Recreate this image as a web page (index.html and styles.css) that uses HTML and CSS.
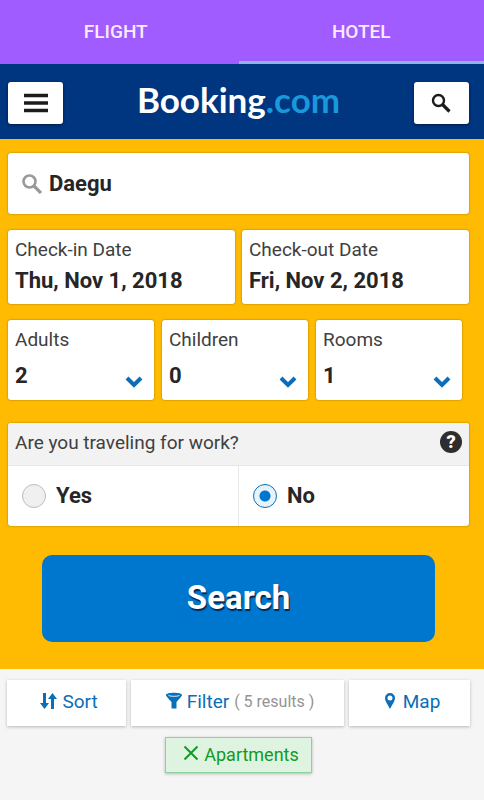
FILE: index.html
```html
<!DOCTYPE html>
<html lang="en">
<head>
    <meta charset="utf-8">
    <meta name="viewport" content="width=device-width, initial-scale=1">
    <title>Booking.com</title>
    <link rel="stylesheet" href="styles.css">
</head>
<body>
    <nav class="tabs">
        <a class="tab" href="#flight">FLIGHT</a>
        <a class="tab active" href="#hotel">HOTEL</a>
    </nav>

    <header class="header">
        <button class="header-btn" type="button" aria-label="Menu">
            <svg width="26" height="20" viewBox="0 0 26 20">
                <path d="M1 2.500h24M1 10h24M1 17.500h24" stroke="#1c1c1c" stroke-width="3.400"/>
            </svg>
        </button>
        <a class="logo" href="#home">Booking<span>.com</span></a>
        <button class="header-btn" type="button" aria-label="Search">
            <svg width="20" height="20" viewBox="0 0 20 20" fill="none" stroke="#1c1c1c">
                <circle cx="7.500" cy="7.500" r="5.500" stroke-width="2.400"/>
                <path d="M11.500 11.500l7 7" stroke-width="3.200"/>
            </svg>
        </button>
    </header>

    <form class="search-form">
        <div class="field destination">
            <svg width="20" height="20" viewBox="0 0 20 20" fill="none" stroke="#999">
                <circle cx="7.500" cy="7.500" r="6" stroke-width="2.600"/>
                <path d="M12 12l7 7" stroke-width="3.200"/>
            </svg>
            <input class="value" type="text" value="Daegu" aria-label="Destination">
        </div>

        <div class="dates">
            <button class="field date" type="button">
                <span class="label">Check-in Date</span>
                <span class="value">Thu, Nov 1, 2018</span>
            </button>
            <button class="field date" type="button">
                <span class="label">Check-out Date</span>
                <span class="value">Fri, Nov 2, 2018</span>
            </button>
        </div>

        <div class="guests">
            <div class="field guest">
                <label class="label" for="adults">Adults</label>
                <div class="select">
                    <select class="value" id="adults">
                        <option>1</option>
                        <option selected>2</option>
                        <option>3</option>
                        <option>4</option>
                    </select>
                    <svg width="18" height="12" viewBox="0 0 18 12"><path d="M2 2l7 7 7-7" fill="none" stroke="#0a6eb8" stroke-width="4"/></svg>
                </div>
            </div>
            <div class="field guest">
                <label class="label" for="children">Children</label>
                <div class="select">
                    <select class="value" id="children">
                        <option selected>0</option>
                        <option>1</option>
                        <option>2</option>
                        <option>3</option>
                    </select>
                    <svg width="18" height="12" viewBox="0 0 18 12"><path d="M2 2l7 7 7-7" fill="none" stroke="#0a6eb8" stroke-width="4"/></svg>
                </div>
            </div>
            <div class="field guest">
                <label class="label" for="rooms">Rooms</label>
                <div class="select">
                    <select class="value" id="rooms">
                        <option selected>1</option>
                        <option>2</option>
                        <option>3</option>
                    </select>
                    <svg width="18" height="12" viewBox="0 0 18 12"><path d="M2 2l7 7 7-7" fill="none" stroke="#0a6eb8" stroke-width="4"/></svg>
                </div>
            </div>
        </div>

        <div class="field work" role="radiogroup" aria-labelledby="work-title">
            <div class="work-head">
                <span class="label" id="work-title">Are you traveling for work?</span>
                <button class="help" type="button" aria-label="Help">?</button>
            </div>
            <div class="work-options">
                <label class="option value"><input type="radio" name="work" value="yes">Yes</label>
                <label class="option value"><input type="radio" name="work" value="no" checked>No</label>
            </div>
        </div>

        <button class="submit" type="submit">Search</button>
    </form>

    <section class="results">
        <div class="toolbar">
            <button class="tool" type="button">
                <svg width="17" height="21" viewBox="0 0 17 21" fill="#0a6eb8">
                    <path d="M3 1h3v10h3l-4.500 6L0 11h3z"/>
                    <path d="M11 17h3V7h3l-4.500-6L8 7h3z"/>
                </svg>
                Sort
            </button>
            <button class="tool" type="button">
                <svg width="16" height="21" viewBox="0 0 16 21">
                    <path d="M0 3c0-3 16-3 16 0 0 1-1 2-5.500 7v6.500h-5V10C1 5 0 4 0 3z" fill="#0a6eb8"/>
                    <path d="M2.500 3.200c2 1.600 9 1.600 11 0" fill="none" stroke="#9fd0ef" stroke-width="1.200"/>
                </svg>
                Filter <small>( 5 results )</small>
            </button>
            <button class="tool" type="button">
                <svg width="14" height="21" viewBox="0 0 14 21">
                    <path d="M6 1a5 5 0 0 0-5 5c0 3.500 3 6.500 5 11 2-4.500 5-7.500 5-11a5 5 0 0 0-5-5zm0 2.500a2.500 2.500 0 1 1 0 5 2.500 2.500 0 0 1 0-5z" fill="#0a6eb8" fill-rule="evenodd"/>
                </svg>
                Map
            </button>
        </div>
        <button class="chip" type="button">
            <svg width="16" height="20" viewBox="0 0 16 20"><path d="M1.500 1.500l13 13M14.500 1.500l-13 13" stroke="#129a24" stroke-width="2"/></svg>
            Apartments
        </button>
    </section>
</body>
</html>
```
FILE: styles.css
```css
:root {
    --blue: #0077cf;
    --blue-dark: #0a6eb8;
    --navy: #003580;
    --yellow: #ffba02;
    --purple: #a05cff;
    --text: #262626;
}

* {
    box-sizing: border-box;
}

body {
    margin: 0;
    min-height: 100vh;
    background: #f5f5f5;
    color: var(--text);
    font-family: Roboto, sans-serif;
}

button,
input,
select {
    margin: 0;
    padding: 0;
    border: none;
    background: none;
    color: inherit;
    font-family: inherit;
}

button {
    cursor: pointer;
}

svg {
    flex: none;
}

.tabs {
    display: flex;
    margin-left: -7px;
    background: var(--purple);
}

.tab {
    flex: 1;
    padding: 20px 0 17px;
    border-bottom: 3px solid transparent;
    color: #fbeaff;
    font-size: 19px;
    font-weight: 500;
    line-height: 24px;
    text-align: center;
    text-decoration: none;
}

.tab.active {
    border-color: #8eb4e8;
}

.header {
    display: flex;
    align-items: center;
    justify-content: space-between;
    padding: 18px 15px 15px 8px;
    background: var(--navy);
}

.header-btn {
    display: flex;
    align-items: center;
    justify-content: center;
    width: 55px;
    height: 42px;
    border-radius: 3px;
    background: #fff;
    box-shadow: 0 1px 3px rgba(0, 0, 0, 0.5);
}

.logo {
    padding-bottom: 8px;
    color: #fff;
    font-family: Lato, sans-serif;
    font-size: 35px;
    font-weight: 700;
    line-height: 34px;
    text-decoration: none;
}

.logo span {
    color: #1a98dc;
}

.search-form {
    display: flex;
    flex-direction: column;
    gap: 16px;
    padding: 14px 15px 27px 8px;
    background: var(--yellow);
}

.field {
    border-radius: 3px;
    background: #fff;
    box-shadow: 0 0 2px rgba(110, 90, 0, 0.7);
}

.label {
    color: #404040;
    font-size: 19px;
    line-height: 24px;
}

.value {
    color: var(--text);
    font-size: 22px;
    font-weight: 700;
    line-height: 28px;
}

.destination {
    display: flex;
    align-items: center;
    gap: 7px;
    padding: 16px 14px;
}

.destination input {
    flex: 1;
    min-width: 0;
    height: 29px;
    outline: none;
}

.dates {
    display: flex;
    gap: 7px;
}

.date {
    display: flex;
    flex: 1;
    flex-direction: column;
    gap: 5px;
    padding: 8px 7px 9px;
    text-align: left;
}

.guests {
    display: flex;
    gap: 8px;
    margin-right: 7px;
}

.guest {
    display: flex;
    flex: 1;
    flex-direction: column;
    gap: 10px;
    padding: 8px 7px 10px;
}

.select {
    display: grid;
    align-items: center;
}

.select select,
.select svg {
    grid-area: 1 / 1;
}

.select select {
    width: 100%;
    appearance: none;
    outline: none;
}

.select svg {
    align-self: end;
    justify-self: end;
    margin: 0 4px 2px 0;
    pointer-events: none;
}

.work {
    margin-top: 7px;
    overflow: hidden;
}

.work-head {
    display: flex;
    justify-content: space-between;
    padding: 8px 7px 10px;
    border-bottom: 1px solid #e6e6e6;
    background: #f2f2f2;
}

.help {
    width: 22px;
    height: 22px;
    border-radius: 50%;
    background: #2e2e2e;
    color: #fff;
    font-size: 18px;
    font-weight: 900;
    line-height: 22px;
}

.work-options {
    display: flex;
}

.option {
    display: flex;
    flex: 1;
    align-items: center;
    gap: 10px;
    padding: 16px 14px;
}

.option + .option {
    border-left: 1px solid #e6e6e6;
}

.option input {
    width: 24px;
    height: 24px;
    border: 1px solid #bdbdbd;
    border-radius: 50%;
    background: #f0f0f0;
    appearance: none;
}

.option input:checked {
    border-color: var(--blue-dark);
    background: radial-gradient(circle, var(--blue) 5px, #e6f3fc 6px);
}

.submit {
    margin: 13px 34px 0;
    padding: 22px 0 23px;
    border-radius: 10px;
    background: var(--blue);
    color: #fff;
    font-size: 33px;
    font-weight: 700;
    line-height: 42px;
    text-shadow: 1px 2px 1px rgba(0, 20, 50, 0.8);
}

.results {
    display: flex;
    flex-direction: column;
    align-items: center;
    gap: 11px;
    padding: 11px 14px 27px 7px;
}

.toolbar {
    display: grid;
    grid-template-columns: 119fr 213fr 121fr;
    gap: 5px;
    width: 100%;
}

.tool {
    display: flex;
    align-items: center;
    justify-content: center;
    gap: 5px;
    padding: 10px 0 12px 5px;
    background: #fff;
    box-shadow: 0 1px 3px rgba(0, 0, 0, 0.25);
    color: var(--blue-dark);
    font-size: 19px;
    line-height: 24px;
    white-space: nowrap;
}

.tool small {
    color: #949494;
    font-size: 16px;
}

.chip {
    display: flex;
    align-items: center;
    gap: 5px;
    padding: 5px 12px 5px 17px;
    border: 1px solid #8fd19c;
    background: #dff3e1;
    box-shadow: 0 1px 3px rgba(0, 0, 0, 0.25);
    color: #129a24;
    font-size: 18px;
    line-height: 24px;
}
```
